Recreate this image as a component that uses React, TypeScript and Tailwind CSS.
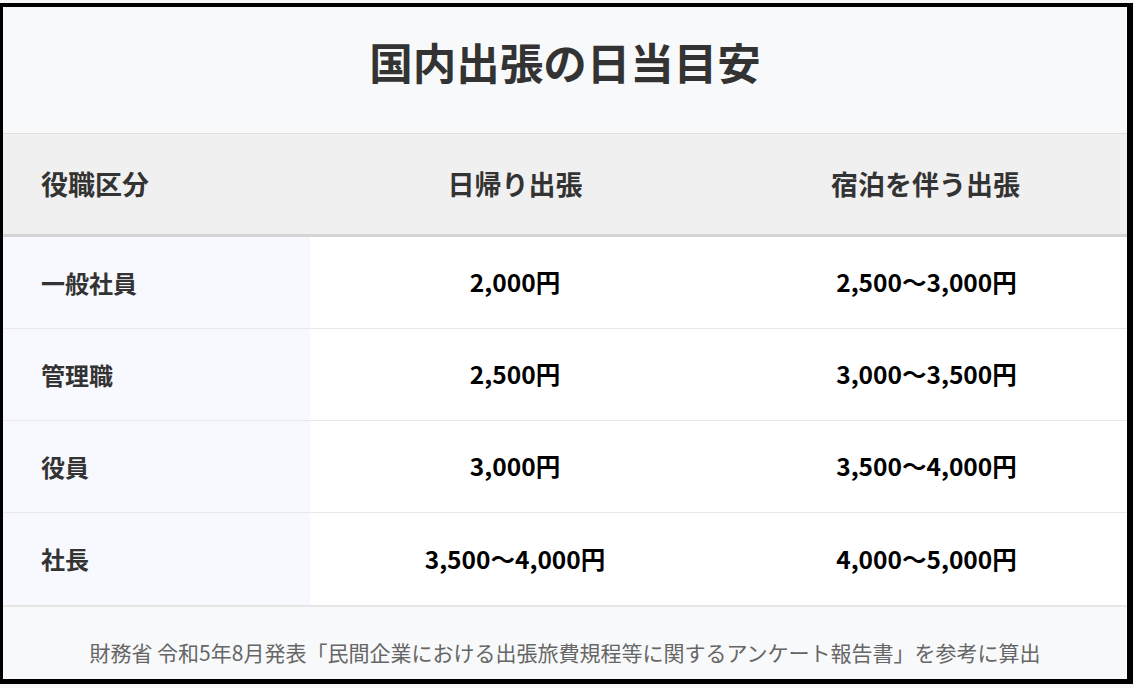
import React from 'react';

const rows = [
  { role: '一般社員', day: '2,000円', stay: '2,500〜3,000円' },
  { role: '管理職', day: '2,500円', stay: '3,000〜3,500円' },
  { role: '役員', day: '3,000円', stay: '3,500〜4,000円' },
  { role: '社長', day: '3,500〜4,000円', stay: '4,000〜5,000円' },
];

function App() {
  return (
    <div
      className="h-[688px] w-[1134px] bg-[#f8f9fa] pt-[3px]"
      style={{ fontFamily: '"Noto Sans CJK JP", "Noto Sans", sans-serif' }}
    >
      <div className="flex h-[681px] w-[1133px] flex-col border-t-4 border-l-[3px] border-r-[6px] border-b-[5px] border-black bg-[#f8f9fa]">
        {/* Title */}
        <div className="flex h-[127px] items-center justify-center border-b border-[#e0e0e0] pb-[16px]">
          <h1 className="text-[43.5px] font-bold leading-none text-[#333]">国内出張の日当目安</h1>
        </div>

        {/* Header */}
        <div className="grid h-[103px] grid-cols-[307px_410px_1fr] border-b-[3px] border-[#d4d4d4] bg-[#f0f0f0] text-[27px] font-bold text-[#333]">
          <div className="flex items-center pl-[38px]">役職区分</div>
          <div className="flex items-center justify-center">日帰り出張</div>
          <div className="flex items-center justify-center pl-[4px]">宿泊を伴う出張</div>
        </div>

        {/* Body */}
        {rows.map((r, i) => (
          <div
            key={r.role}
            className={`grid h-[92px] grid-cols-[307px_410px_1fr] ${i < rows.length - 1 ? 'border-b border-[#e9e9e9]' : ''}`}
          >
            <div className="flex items-center bg-[#f8f9fe] pl-[38px] text-[24px] font-bold text-[#333]">{r.role}</div>
            <div className="flex items-center justify-center bg-white text-[24.5px] font-bold text-black">{r.day}</div>
            <div className="flex items-center justify-center bg-white pl-[6px] text-[24.5px] font-bold text-black">{r.stay}</div>
          </div>
        ))}

        {/* Footer */}
        <div className="flex flex-1 items-center justify-center border-t-2 border-[#e6e6e6] bg-[#f8f9fa] pt-[18px]">
          <p className="text-[21px] leading-none text-[#666]">
            財務省 令和5年8月発表「民間企業における出張旅費規程等に関するアンケート報告書」を参考に算出
          </p>
        </div>
      </div>
    </div>
  );
}

export default App;
